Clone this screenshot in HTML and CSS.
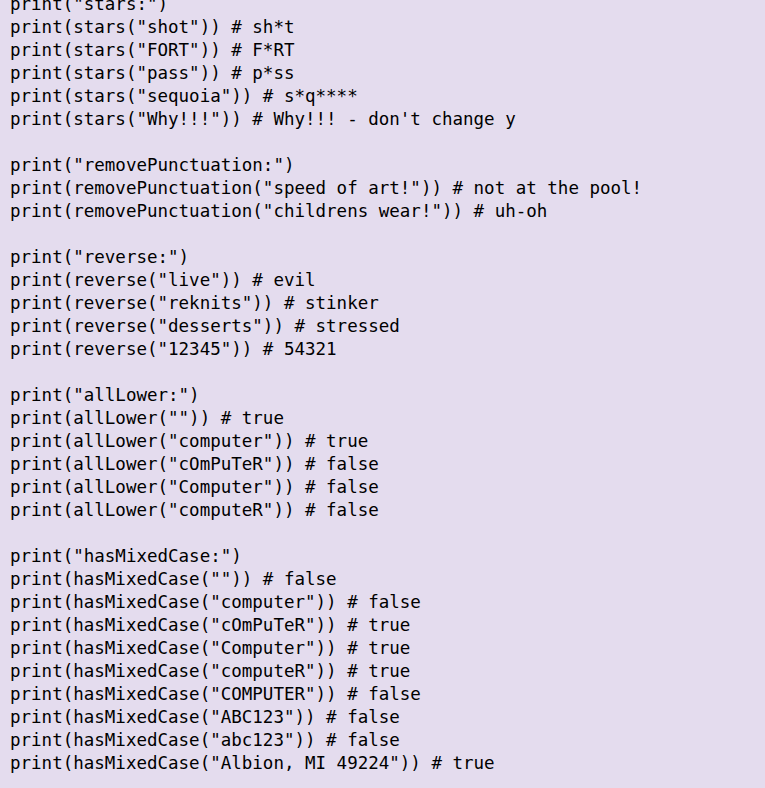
FILE: index.html
```html
<!DOCTYPE html>
<html>
<head>
<meta charset="utf-8">
<link rel="stylesheet" href="styles.css">
</head>
<body>
<pre class="code">print("stars:")
print(stars("shot")) # sh*t
print(stars("FORT")) # F*RT
print(stars("pass")) # p*ss
print(stars("sequoia")) # s*q****
print(stars("Why!!!")) # Why!!! - don't change y

print("removePunctuation:")
print(removePunctuation("speed of art!")) # not at the pool!
print(removePunctuation("childrens wear!")) # uh-oh

print("reverse:")
print(reverse("live")) # evil
print(reverse("reknits")) # stinker
print(reverse("desserts")) # stressed
print(reverse("12345")) # 54321

print("allLower:")
print(allLower("")) # true
print(allLower("computer")) # true
print(allLower("cOmPuTeR")) # false
print(allLower("Computer")) # false
print(allLower("computeR")) # false

print("hasMixedCase:")
print(hasMixedCase("")) # false
print(hasMixedCase("computer")) # false
print(hasMixedCase("cOmPuTeR")) # true
print(hasMixedCase("Computer")) # true
print(hasMixedCase("computeR")) # true
print(hasMixedCase("COMPUTER")) # false
print(hasMixedCase("ABC123")) # false
print(hasMixedCase("abc123")) # false
print(hasMixedCase("Albion, MI 49224")) # true
</pre>
</body>
</html>
```
FILE: styles.css
```css
html, body {
  margin: 0;
  padding: 0;
  background: #e4dcee;
  overflow: hidden;
}
.code {
  margin: -7px 0 0 0;
  padding: 0 0 0 10px;
  font-family: "DejaVu Sans Mono", monospace;
  font-size: 17.5px;
  line-height: 23px;
  color: #000;
  white-space: pre;
}
```
